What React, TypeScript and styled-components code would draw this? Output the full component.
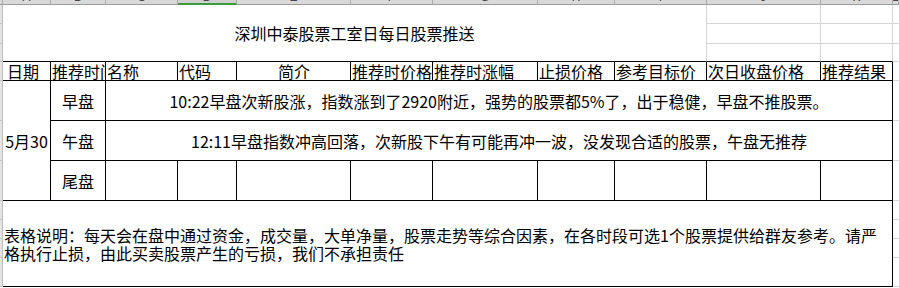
import React from 'react';
import styled, { createGlobalStyle } from 'styled-components';

const GRID = '#d4d4d4';
const INK = '#000';

const columnWidths = [48, 55, 72, 59, 114, 82, 105, 77, 92, 114, 72];
const columnLetters = ['A', 'B', 'C', 'D', 'E', 'F', 'G', 'H', 'I', 'J', 'K', 'L'];
const selectedColumn = 'D';

// column-heading strip, rows 1..3 (title), header row, three session rows, footer rows
const rowHeights = [5, 19, 20, 18, 19, 40, 40, 40, 19, 19, 19, 29];

const headers = [
  { label: '日期' },
  { label: '推荐时间' },
  { label: '名称' },
  { label: '代码' },
  { label: '简介', center: true },
  { label: '推荐时价格' },
  { label: '推荐时涨幅' },
  { label: '止损价格' },
  { label: '参考目标价' },
  { label: '次日收盘价格' },
  { label: '推荐结果' },
];

const sessions = [
  {
    name: '早盘',
    note: '10:22早盘次新股涨，指数涨到了2920附近，强势的股票都5%了，出于稳健，早盘不推股票。',
  },
  {
    name: '午盘',
    note: '12:11早盘指数冲高回落，次新股下午有可能再冲一波，没发现合适的股票，午盘无推荐',
  },
  { name: '尾盘' },
];

const GlobalStyle = createGlobalStyle`
  html, body {
    margin: 0;
    padding: 0;
    background: #fff;
    overflow: hidden;
  }
`;

const Sheet = styled.div`
  width: 899px;
  height: 288px;
  display: grid;
  grid-template-columns: 3px ${columnWidths.map(w => `${w}px`).join(' ')} 1fr;
  grid-template-rows: ${rowHeights.map(h => `${h}px`).join(' ')} 1fr;
  font-family: 'Noto Sans CJK SC', 'Noto Sans CJK TC', sans-serif;
  font-size: 16px;
  color: ${INK};
  overflow: hidden;
`;

const ColumnHead = styled.div<{ $col: number; $selected?: boolean }>`
  grid-column: ${p => p.$col};
  grid-row: 1;
  box-sizing: border-box;
  background: ${p => (p.$selected ? '#d0d0d0' : '#d9d9d9')};
  border-right: 1px solid #ababab;
  border-bottom: ${p => (p.$selected ? '2px solid #3c9c3c' : '1px solid #9c9c9c')};
  overflow: hidden;
  display: flex;
  justify-content: center;
  font-family: 'Liberation Sans', sans-serif;
  font-size: 12px;
  line-height: 12px;
  color: #444;

  span {
    margin-top: -9px;
  }
`;

const RowHead = styled.div<{ $row: number }>`
  grid-column: 1;
  grid-row: ${p => p.$row};
  box-sizing: border-box;
  background: #e4e4e4;
  border-right: 1px solid #bcbcbc;
  border-bottom: 1px solid #c4c4c4;
`;

const Cell = styled.div<{
  $col: number;
  $row: number;
  $colSpan?: number;
  $rowSpan?: number;
  $right?: string;
  $bottom?: string;
  $align?: 'left' | 'center';
}>`
  grid-column: ${p => p.$col} / span ${p => p.$colSpan ?? 1};
  grid-row: ${p => p.$row} / span ${p => p.$rowSpan ?? 1};
  box-sizing: border-box;
  border-right: 1px solid ${p => p.$right ?? GRID};
  border-bottom: 1px solid ${p => p.$bottom ?? GRID};
  display: flex;
  align-items: center;
  justify-content: ${p => (p.$align === 'left' ? 'flex-start' : 'center')};
  white-space: nowrap;
  overflow: hidden;
  min-width: 0;
`;

const HeaderCell = styled(Cell)<{ $first?: boolean }>`
  padding-left: ${p => (p.$first ? '4px' : '1px')};
  line-height: 19px;
`;

const FooterCell = styled(Cell)`
  padding-left: 1px;
  white-space: normal;
  line-height: 18px;
`;

const FillerCell = styled(Cell)`
  border-right: none;
`;

export default function App() {
  const lastCol = columnWidths.length + 2;

  return (
    <>
      <GlobalStyle />
      <Sheet>
        <ColumnHead $col={1} />
        {columnLetters.map((l, i) => (
          <ColumnHead key={l} $col={i + 2} $selected={l === selectedColumn}>
            <span>{l}</span>
          </ColumnHead>
        ))}

        {rowHeights.slice(1).map((_, i) => (
          <RowHead key={`rh${i}`} $row={i + 2} />
        ))}

        <Cell $col={2} $row={2} $colSpan={9} $rowSpan={3} $bottom={INK}>
          深圳中泰股票工室日每日股票推送
        </Cell>
        {[0, 1, 2].map(r =>
          [11, 12].map(c => (
            <Cell key={`t${r}${c}`} $col={c} $row={r + 2} $bottom={r === 2 ? INK : GRID} />
          ))
        )}
        {[0, 1, 2].map(r => (
          <FillerCell key={`tl${r}`} $col={lastCol} $row={r + 2} />
        ))}

        {headers.map((h, i) => (
          <HeaderCell
            key={h.label}
            $col={i + 2}
            $row={5}
            $first={i === 0}
            $right={INK}
            $bottom={INK}
            $align={h.center ? 'center' : 'left'}
          >
            {h.label}
          </HeaderCell>
        ))}
        <FillerCell $col={lastCol} $row={5} />

        <Cell $col={2} $row={6} $rowSpan={3} $right={INK} $bottom={INK}>
          5月30
        </Cell>
        {sessions.map((s, r) => (
          <React.Fragment key={s.name}>
            <Cell $col={3} $row={r + 6} $right={INK} $bottom={INK}>
              {s.name}
            </Cell>
            {s.note ? (
              <Cell $col={4} $row={r + 6} $colSpan={9} $right={INK} $bottom={INK}>
                {s.note}
              </Cell>
            ) : (
              columnWidths.slice(2).map((_, c) => (
                <Cell key={`e${c}`} $col={c + 4} $row={r + 6} $right={INK} $bottom={INK} />
              ))
            )}
            <FillerCell $col={lastCol} $row={r + 6} />
          </React.Fragment>
        ))}

        <FooterCell $col={2} $row={9} $colSpan={11} $rowSpan={4} $right={INK} $bottom={INK} $align="left">
          表格说明：每天会在盘中通过资金，成交量，大单净量，股票走势等综合因素，在各时段可选1个股票提供给群友参考。请严格执行止损，由此买卖股票产生的亏损，我们不承担责任
        </FooterCell>
        {[0, 1, 2, 3].map(r => (
          <FillerCell key={`f${r}`} $col={lastCol} $row={r + 9} />
        ))}
      </Sheet>
    </>
  );
}
